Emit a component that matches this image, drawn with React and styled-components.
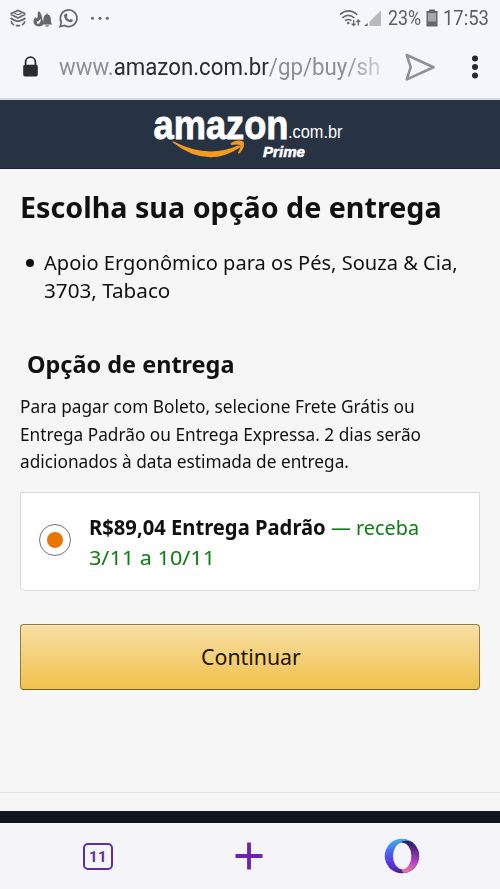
import React from 'react';
import styled, { createGlobalStyle } from 'styled-components';

const GlobalStyle = createGlobalStyle`
    * {
        box-sizing: border-box;
    }

    body {
        margin: 0;
        background-color: #f6f6f6;
        font-family: "Noto Sans", "Open Sans", sans-serif;
        color: #111;
    }
`;


const Screen = styled.div`
    display: flex;
    flex-direction: column;
    width: 500px;
    height: 889px;
    overflow: hidden;
    background-color: #f6f6f6;
`;


const StatusBar = styled.div`
    display: flex;
    align-items: center;
    justify-content: space-between;
    height: 36px;
    padding: 0 9px 0 9px;
    background-color: #f5f6fb;
    color: #5c5d61;
    font-family: Roboto, sans-serif;
    font-size: 20.5px;
`;


const StatusGroup = styled.div`
    display: flex;
    align-items: center;
    height: 36px;

    svg {
        display: block;
    }
`;


const StatusText = styled.span`
    width: ${props => props.$width}px;
    margin-left: ${props => props.$gap}px;
    line-height: 36px;
    white-space: nowrap;
    transform: scaleX(${props => props.$squeeze});
    transform-origin: left;
`;


const BatteryFrame = styled.span`
    display: flex;
    align-items: center;
    width: 17px;
    height: 36px;
    margin-left: 4px;
`;


const AddressBar = styled.div`
    display: flex;
    align-items: center;
    height: 64px;
    padding: 0 21px 0 21px;
    background-color: #f5f6fb;
    border-bottom: 2px solid #d3dae6;

    svg {
        display: block;
        flex: none;
    }
`;


const Url = styled.div`
    flex: none;
    width: 323px;
    margin-left: 20px;
    color: #8e8f94;
    font-family: Roboto, sans-serif;
    font-size: 23px;
    line-height: 37px;
    white-space: nowrap;
    -webkit-mask-image: linear-gradient(to right, #000 285px, rgba(0, 0, 0, .3) 323px);
    mask-image: linear-gradient(to right, #000 285px, rgba(0, 0, 0, .3) 323px);
`;


const Host = styled.span`
    color: #2b2c33;
`;


const SendBox = styled.span`
    margin: 0 auto 0 22px;
`;


const Header = styled.header`
    height: 69px;
    background-color: #273342;
    border-bottom: 1px solid #1b2430;

    svg {
        display: block;
    }
`;


const Content = styled.main`
    flex: 1;
    padding: 0 20px;
`;


const Title = styled.h1`
    margin: 18px 0 0;
    font-size: 28.5px;
    font-weight: 700;
    line-height: 40px;
`;


const Subtitle = styled.h2`
    margin: 42px 0 0 7px;
    font-size: 24px;
    font-weight: 700;
    line-height: 36px;
`;


const Line = styled.span`
    display: block;
    white-space: nowrap;
    transform: scaleX(${props => props.$squeeze || 1});
    transform-origin: left;
`;


const Items = styled.ul`
    margin: 21px 0 0;
    padding: 0 0 0 24px;
    font-size: 20.5px;
    line-height: 28px;
    list-style: none;
`;


const Item = styled.li`
    position: relative;

    &::before {
        content: "";
        position: absolute;
        top: 11px;
        left: -18px;
        width: 8px;
        height: 8px;
        border-radius: 50%;
        background-color: #111;
    }
`;


const Notice = styled.p`
    margin: 11px 0 0;
    font-size: 17.8px;
    line-height: 27.7px;
`;


const Option = styled.label`
    display: flex;
    align-items: center;
    height: 99px;
    margin-top: 16px;
    padding-left: 18px;
    background-color: #fff;
    border: 1px solid #d9d9d9;
    border-radius: 0 0 5px 5px;
`;


const Radio = styled.span`
    display: flex;
    align-items: center;
    justify-content: center;
    flex: none;
    width: 32px;
    height: 32px;
    margin-bottom: 3px;
    border: 1px solid #70757a;
    border-radius: 50%;

    &::after {
        content: "";
        width: 16px;
        height: 16px;
        border-radius: 50%;
        background-color: #e77600;
    }
`;


const OptionText = styled.div`
    margin-left: 18px;
    color: #0b7d12;
    font-size: 20.5px;
    line-height: 30px;
`;


const OptionRow = styled.div`
    display: flex;
    height: 30px;
`;


const Price = styled.b`
    width: 242px;
    color: #111;
`;


const Continue = styled.button`
    display: flex;
    align-items: center;
    justify-content: center;
    width: 100%;
    height: 66px;
    margin-top: 33px;
    padding: 0 0 2px 2px;
    background: linear-gradient(to bottom, #f7dfa5, #f0c14b);
    border: 1px solid #94793a;
    border-bottom-color: #7c6124;
    border-radius: 4px;
    box-shadow: inset 0 1px 0 rgba(255, 255, 255, .4);
    color: #1c1508;
    font-family: inherit;
    font-size: 21.3px;
`;


const Footer = styled.footer`
    height: 31px;
    border-top: 1px solid #e3e3e3;
    border-bottom: 12px solid #0f141f;
`;


const Toolbar = styled.nav`
    display: flex;
    align-items: center;
    justify-content: space-between;
    height: 66px;
    padding: 0 80px 0 83px;
    background-color: #f5f5f9;

    svg {
        display: block;
    }
`;


const Tabs = styled.div`
    width: 30px;
    height: 27px;
    border: 2.5px solid #5e2ea6;
    border-radius: 5px;
    color: #5e2ea6;
    font-family: Roboto, sans-serif;
    font-size: 15px;
    font-weight: 700;
    letter-spacing: .3px;
    line-height: 24px;
    text-align: center;
`;


const NotificationIcons = () => (
    <svg width="104" height="24" viewBox="9 5 104 24" fill="none" stroke="#66676b" strokeWidth="1.7">
        {/* layered badge */}
        <path d="M10.6 12.8 L18 9.4 L25.4 12.8 M10.6 13.2 Q14 15 18 17 Q22 15 25.4 13.2 M10.6 17 Q14 20 18 20.4 Q22 20 25.4 17" />
        <path d="M14.5 12.4 L18 13.7 L21.5 12.4" strokeWidth="1.2" />
        <path d="M11 20.2 Q11.8 22.7 14 24 M25 20.2 Q24.2 22.7 22 24 M15.8 24.6 H20.2" />
        {/* flame */}
        <path d="M39 10.3 C36.5 11.5 38.5 14.5 37.5 16.5 C36.5 18 35.8 17 35.5 16 C32.5 18.5 32.5 25 39 25.5 C43 25.5 44 22.5 43 20 C41.5 17 42.8 14 39 10.3 Z" fill="#66676b" stroke="none" />
        <path d="M36.5 20.5 Q39 21 40.6 17.5 Q41.2 22 37.5 23.3 Z" fill="#f5f6fb" stroke="none" />
        {/* bell */}
        <path d="M42 23.5 Q43.4 22 43.4 18.5 Q43.4 14 46.4 13.6 V12.6 H47.8 V13.6 Q50.8 14 50.8 18.5 Q50.8 22 52.4 23.5 Z M45.6 24.2 H48.7 V25.6 H45.6 Z" fill="#66676b" stroke="none" />
        {/* whatsapp */}
        <path d="M60.2 25.6 L61.3 21.2 A8.3 8.3 0 1 1 64.4 24.4 Z" strokeWidth="1.7" />
        <path d="M65.2 12.7 L66.6 12.6 L67.5 14.9 L66.5 16.1 Q67.5 18.2 69.7 19 L70.8 17.9 L73 19 Q73 21 70.6 21.2 Q64.5 20.2 64 14.7 Q64.2 13.3 65.2 12.7 Z" fill="#66676b" stroke="none" />
        <g fill="#66676b" stroke="none">
            <circle cx="92.5" cy="17.2" r="1.5" />
            <circle cx="100" cy="17.2" r="1.5" />
            <circle cx="107.3" cy="17.2" r="1.5" />
        </g>
    </svg>
);


const SignalIcons = () => (
    <svg width="44" height="24" viewBox="339 5 44 24" fill="none" stroke="#66676b" strokeWidth="1.7">
        <path d="M338.8 13.6 Q347.3 6.3 356.3 13.6 M341.3 16.8 Q347.3 12 353.3 16.8 M344.1 19.7 Q347.3 17.3 350.4 19.7" />
        <circle cx="347.3" cy="22" r="1.3" fill="#66676b" stroke="none" />
        <path d="M352.6 19 V24.5 M350.7 22.6 L352.6 24.6 L354.5 22.6 M357.3 24.6 V19 M355.4 21 L357.3 19 L359.2 21" strokeWidth="1.3" />
        <path d="M363 25 L366.7 22 V25 Z" fill="#66676b" stroke="none" />
        <path d="M368.5 25 V20.5 L380 9.3 V25 Z" fill="#b9babe" stroke="none" />
    </svg>
);


const BatteryIcon = () => (
    <svg width="12" height="18" viewBox="0 0 12 18">
        <path d="M3 0.5 H9 V2 H11.5 V17.5 H0.5 V2 H3 Z" fill="#66676b" />
        <path d="M2 4 H10 V12.5 H2 Z" fill="#a6a7ab" />
    </svg>
);


const LockIcon = () => (
    <svg width="18" height="22" viewBox="0 0 18 22">
        <path d="M4.6 10 V6 A4.9 4.9 0 0 1 14.4 6 V10" fill="none" stroke="#2b2c30" strokeWidth="1.8" />
        <rect x="2.2" y="8.7" width="14.6" height="11.8" rx="1.8" fill="#2b2c30" />
    </svg>
);


const SendIcon = () => (
    <svg width="32" height="30" viewBox="0 0 32 30">
        <path d="M2.8 3 L29.5 15.2 L2.8 27.4 L6.7 15.2 Z" fill="none" stroke="#909196" strokeWidth="2.6" strokeLinejoin="round" />
    </svg>
);


const MenuIcon = () => (
    <svg width="8" height="26" viewBox="0 0 8 26" fill="#28292e">
        <circle cx="4" cy="4.5" r="3" />
        <circle cx="4" cy="13" r="3" />
        <circle cx="4" cy="21.5" r="3" />
    </svg>
);


const Logo = () => (
    <svg width="500" height="68" viewBox="0 100 500 68" fontFamily="Liberation Sans, Arial, sans-serif" fill="#fff">
        <text x="153.5" y="138.5" fontSize="41" fontWeight="700" textLength="135" lengthAdjust="spacingAndGlyphs" stroke="#fff" strokeWidth="0.9">amazon</text>
        <text x="288" y="138" fontSize="18.5" textLength="54.5" lengthAdjust="spacingAndGlyphs">.com.br</text>
        <text x="263" y="157" fontSize="14.5" fontWeight="700" fontStyle="italic" textLength="42" lengthAdjust="spacingAndGlyphs" stroke="#fff" strokeWidth="0.5">Prime</text>
        <path d="M173.3 141.2 Q207 159 237.5 145.8 Q241.5 144.6 239.5 147.8 Q207 169.2 172.8 142.6 Q172 141 173.3 141.2 Z" fill="#f59a1d" />
        <path d="M231 143 Q237 139.2 243.5 141.4 Q245.6 146.5 239.7 153.2 Q237.6 154.4 238.2 152 Q241 147.5 240.1 144.9 Q236.5 143.9 231.8 144.9 Q229.8 144.4 231 143 Z" fill="#f59a1d" />
    </svg>
);


const PlusIcon = () => (
    <svg width="28" height="28" viewBox="0 0 28 28">
        <path d="M14 0.5 V27.5 M0.5 14 H27.5" stroke="#6b20b8" strokeWidth="3.8" />
    </svg>
);


const OperaIcon = () => (
    <svg width="36" height="36" viewBox="0 0 36 36">
        <defs>
            <linearGradient id="outer" x1="0.3" y1="0" x2="0.5" y2="1">
                <stop offset="0" stopColor="#42b4e6" />
                <stop offset="0.35" stopColor="#4d62ee" />
                <stop offset="0.7" stopColor="#5a30e0" />
                <stop offset="1" stopColor="#43208f" />
            </linearGradient>
            <linearGradient id="inner" x1="0.5" y1="0" x2="0.4" y2="1">
                <stop offset="0" stopColor="#241a55" />
                <stop offset="0.35" stopColor="#70309b" />
                <stop offset="0.65" stopColor="#bd43c6" />
                <stop offset="1" stopColor="#ef7893" />
            </linearGradient>
        </defs>
        <circle cx="18" cy="18" r="17.3" fill="url(#outer)" />
        <path d="M18 3.5 Q23 1.5 28.5 4.4 A17.3 17.3 0 0 1 20 35.1 Q17 33 18 31 Z" fill="url(#inner)" />
        <ellipse cx="18.2" cy="18" rx="9.2" ry="13.2" fill="#f5f5f9" />
    </svg>
);


const App = () => (
    <Screen>
        <GlobalStyle />
        <StatusBar>
            <StatusGroup>
                <NotificationIcons />
            </StatusGroup>
            <StatusGroup>
                <SignalIcons />
                <StatusText $width={34} $gap={4} $squeeze={0.87}>23%</StatusText>
                <BatteryFrame><BatteryIcon /></BatteryFrame>
                <StatusText $width={48} $gap={0} $squeeze={0.9}>17:53</StatusText>
            </StatusGroup>
        </StatusBar>
        <AddressBar>
            <LockIcon />
            <Url><Line $squeeze={0.967}>www.<Host>amazon.com.br</Host>/gp/buy/sh</Line></Url>
            <SendBox><SendIcon /></SendBox>
            <MenuIcon />
        </AddressBar>
        <Header>
            <Logo />
        </Header>
        <Content>
            <Title><Line $squeeze={1.006}>Escolha sua opção de entrega</Line></Title>
            <Items>
                <Item>
                    <Line $squeeze={0.979}>Apoio Ergonômico para os Pés, Souza &amp; Cia,</Line>
                    <Line $squeeze={1.008}>3703, Tabaco</Line>
                </Item>
            </Items>
            <Subtitle><Line $squeeze={0.977}>Opção de entrega</Line></Subtitle>
            <Notice>
                <Line $squeeze={0.972}>Para pagar com Boleto, selecione Frete Grátis ou</Line>
                <Line $squeeze={0.97}>Entrega Padrão ou Entrega Expressa. 2 dias serão</Line>
                <Line $squeeze={0.97}>adicionados à data estimada de entrega.</Line>
            </Notice>
            <Option>
                <Radio />
                <OptionText>
                    <OptionRow>
                        <Price><Line $squeeze={0.985}>R$89,04 Entrega Padrão</Line></Price>
                        <Line $squeeze={0.968}>— receba</Line>
                    </OptionRow>
                    <Line $squeeze={1.055}>3/11 a 10/11</Line>
                </OptionText>
            </Option>
            <Continue>Continuar</Continue>
        </Content>
        <Footer />
        <Toolbar>
            <Tabs>11</Tabs>
            <PlusIcon />
            <OperaIcon />
        </Toolbar>
    </Screen>
);

export default App;
